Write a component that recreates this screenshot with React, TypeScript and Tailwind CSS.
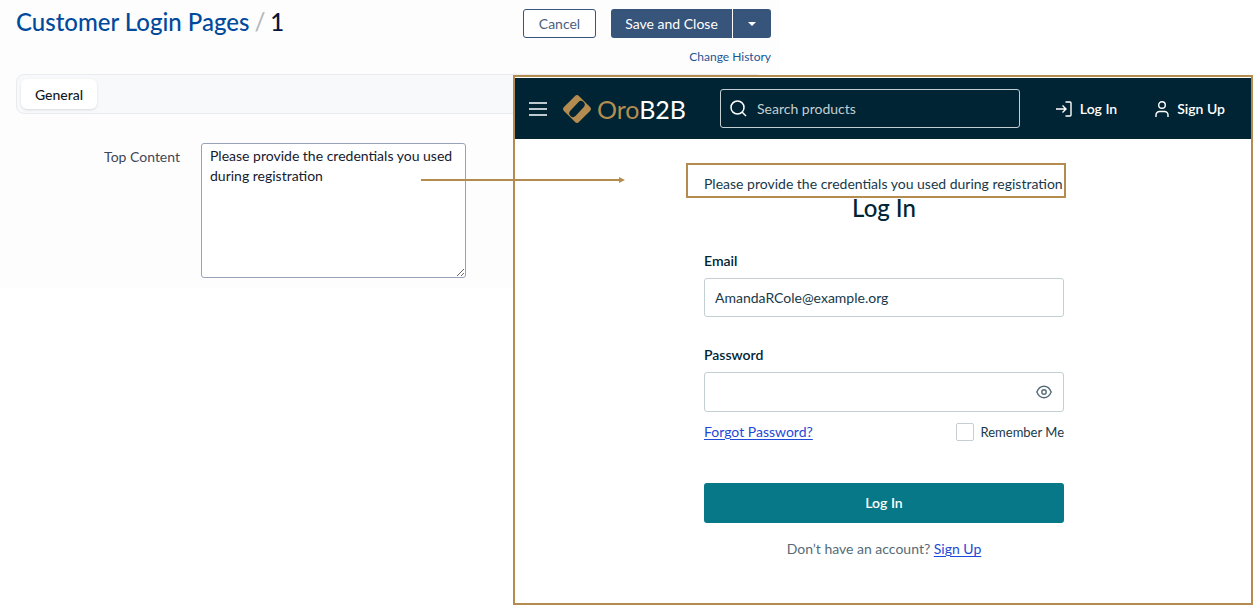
import React from "react";

function OroMark() {
  return (
    <svg width="28" height="28" viewBox="0 0 28 28" aria-hidden="true" className="shrink-0">
      <rect x="3.400" y="3.400" width="21.200" height="21.200" rx="2.800" fill="#b48c4f" transform="rotate(45 14 14)" />
      <path d="M10 18.300 L18 9.700" stroke="#002434" strokeWidth="7.300" strokeLinecap="round" />
    </svg>
  );
}

function AdminPage() {
  return (
    <div className="col-start-1 row-start-1 flex w-full max-w-[780px] flex-col self-start bg-[#fdfdfd] pb-[10px]">
      <header className="flex items-start justify-between pr-[9px] pl-4">
        <h1 className="flex items-center gap-[5px] pt-[6px] text-[24px] leading-8 font-medium whitespace-nowrap text-[#0a1439]">
          <a href="#pages" className="text-[#004a9c]">Customer Login Pages</a>
          <span className="text-[#b5b8bd]">/</span>
          <span>1</span>
        </h1>
        <div className="flex flex-col items-end gap-[9px] pt-[9px]">
          <div className="flex gap-[15px]">
            <button type="button" className="h-[29px] w-[73px] rounded-[3px] border border-[#37547a] bg-white text-[14px] text-[#4c607d]">
              Cancel
            </button>
            <div className="flex gap-px">
              <button type="button" className="h-[29px] w-[121px] rounded-l-[3px] bg-[#37547a] text-[14px] text-white">
                Save and Close
              </button>
              <button type="button" aria-label="More save options" className="flex h-[29px] w-[38px] items-center justify-center rounded-r-[3px] bg-[#37547a]">
                <svg width="8" height="4" viewBox="0 0 8 4" aria-hidden="true">
                  <path d="M0 0h8L4 4z" fill="#fff" />
                </svg>
              </button>
            </div>
          </div>
          <a href="#history" className="text-[12px] leading-5 text-[#1d5594]">Change History</a>
        </div>
      </header>

      <nav className="mt-[7px] mr-4 ml-4 flex rounded-lg border border-[#e9ebef] bg-[#f8f9fb] p-1">
        <button type="button" className="h-[30px] w-[76px] rounded-md bg-white text-[14px] font-medium text-[#15181f] shadow-sm">
          General
        </button>
      </nav>

      <div className="mt-[29px] flex items-start gap-[21px] pl-[60px]">
        <label htmlFor="top-content" className="w-[120px] pt-1 text-right text-[14px] leading-5 text-[#3f4757]">
          Top Content
        </label>
        <textarea
          id="top-content"
          defaultValue="Please provide the credentials you used during registration"
          className="h-[135px] w-[265px] rounded-[3px] border border-[#98a2b8] bg-white px-2 py-[2px] text-[14px] leading-5 text-[#15202e]"
        />
      </div>
    </div>
  );
}

function StoreHeader() {
  return (
    <header className="flex h-[61px] items-center bg-[#002434] pr-[26px] pl-[14px] text-white">
      <button type="button" aria-label="Menu" className="shrink-0">
        <svg width="18" height="14" viewBox="0 0 18 14" stroke="#fff" strokeWidth="1.5" aria-hidden="true">
          <path d="M0 1h18M0 7h18M0 13h18" />
        </svg>
      </button>
      <a href="#home" className="ml-4 flex w-[157px] shrink-0 items-center gap-[6px]">
        <OroMark />
        <span className="text-[25px] leading-8 text-white">
          <span className="text-[#b48c4f]">Oro</span>B2B
        </span>
      </a>
      <div className="flex h-[39px] w-[300px] items-center rounded-[3px] border border-[#c3cfd0] pr-2 pl-[9px]">
        <svg width="17" height="17" viewBox="0 0 17 17" fill="none" stroke="#fff" strokeWidth="1.5" aria-hidden="true" className="shrink-0">
          <circle cx="7.5" cy="7.5" r="6.5" />
          <path d="M12 12l4 4" />
        </svg>
        <input
          type="search"
          aria-label="Search products"
          placeholder="Search products"
          className="ml-[10px] min-w-0 flex-1 bg-transparent text-[14px] text-white outline-none placeholder:text-[#c3cfd0]"
        />
      </div>
      <nav className="ml-auto flex shrink-0 items-center gap-[38px] text-[14px] leading-5 font-semibold">
        <a href="#login" className="flex items-center gap-2">
          <svg width="16" height="16" viewBox="0 0 16 16" fill="none" stroke="#fff" strokeWidth="1.4" aria-hidden="true">
            <path d="M0 8h10M6.500 4.500L10 8l-3.500 3.500M9.500 1H14a1 1 0 0 1 1 1v12a1 1 0 0 1-1 1H9.500" />
          </svg>
          Log In
        </a>
        <a href="#signup" className="flex items-center gap-2">
          <svg width="14" height="16" viewBox="0 0 14 16" fill="none" stroke="#fff" strokeWidth="1.4" aria-hidden="true">
            <circle cx="7" cy="4" r="3.300" />
            <path d="M1 16v-2a3.500 3.500 0 0 1 3.500-3.500h5A3.500 3.500 0 0 1 13 14v2" />
          </svg>
          Sign Up
        </a>
      </nav>
    </header>
  );
}

function LoginForm() {
  return (
    <form className="mx-auto flex w-[362px] flex-col pt-[35px] pb-[44px] pl-[2px] text-[14px] leading-5 text-[#18394a]">
      <p className="relative whitespace-nowrap">
        Please provide the credentials you used during registration
        <span className="absolute -top-[11px] -right-[2px] -bottom-1 -left-[18px] border-2 border-[#b48c4f]" />
      </p>
      <h2 className="text-center text-[24px] leading-7 font-medium text-[#002434]">Log In</h2>

      <label htmlFor="email" className="mt-[29px] font-semibold text-[#002434]">Email</label>
      <input
        id="email"
        type="email"
        defaultValue="AmandaRCole@example.org"
        className="mt-[7px] h-[39px] rounded-[3px] border border-[#c3cfd0] px-[10px]"
      />

      <label htmlFor="password" className="mt-7 font-semibold text-[#002434]">Password</label>
      <div className="mt-[7px] flex h-10 items-center rounded-[3px] border border-[#c3cfd0] pr-[11px] pl-[10px]">
        <input id="password" type="password" className="min-w-0 flex-1 outline-none" />
        <button type="button" aria-label="Show password">
          <svg width="16" height="14" viewBox="0 0 16 14" fill="none" stroke="#556b78" strokeWidth="1.4" aria-hidden="true" className="block">
            <path d="M.8 7C2.400 3.200 5 1.300 8 1.300S13.600 3.200 15.200 7C13.600 10.800 11 12.700 8 12.700S2.400 10.800.8 7z" />
            <circle cx="8" cy="7" r="2.200" />
          </svg>
        </button>
      </div>

      <div className="mt-[10px] flex items-center justify-between">
        <a href="#forgot" className="text-[#1f49d8] underline underline-offset-2">Forgot Password?</a>
        <label className="flex items-center gap-[7px] text-[13px]">
          <input type="checkbox" className="size-[18px] appearance-none rounded-[2px] border border-[#c3cfd0] bg-white" />
          Remember Me
        </label>
      </div>

      <button type="submit" className="mt-[41px] h-10 rounded-[3px] bg-[#067887] font-semibold text-white">
        Log In
      </button>
      <p className="mt-4 text-center text-[#556b78]">
        Don’t have an account? <a href="#signup" className="text-[#1f49d8] underline underline-offset-2">Sign Up</a>
      </p>
    </form>
  );
}

export default function App() {
  return (
    <main className="relative grid min-h-screen grid-cols-1 bg-white font-['Lato',sans-serif]">
      <AdminPage />
      <section className="z-10 col-start-1 row-start-1 mt-[75px] ml-[513px] border-2 border-[#b48c4f] bg-white pt-px">
        <StoreHeader />
        <LoginForm />
      </section>
      <svg width="204" height="8" viewBox="0 0 204 8" aria-hidden="true" className="absolute top-[176px] left-[421px] z-20">
        <path d="M0 3h198V1l6 3-6 3V5H0z" fill="#b48c4f" />
      </svg>
    </main>
  );
}
